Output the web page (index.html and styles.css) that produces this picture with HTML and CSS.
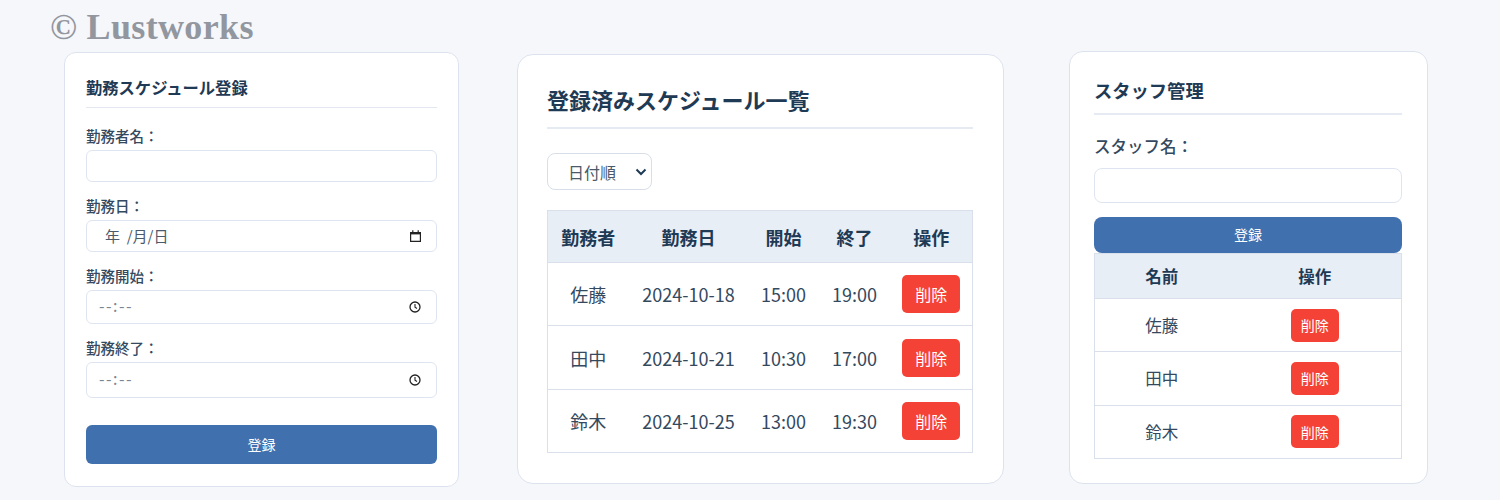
FILE: index.html
```html
<!DOCTYPE html>
<html lang="ja">
<head>
  <meta charset="UTF-8" />
  <title>勤務スケジュール</title>
  <link rel="stylesheet" href="styles.css">
</head>
<body>
  <div class="watermark">© Lustworks</div>
  <main class="page">
    <section class="card card-form">
      <h2>勤務スケジュール登録</h2>
      <label>勤務者名：</label>
      <div class="input h-name"></div>
      <label>勤務日：</label>
      <div class="input h-date date">
        <span>年 &nbsp;/月/日</span>
        <svg width="11" height="12" viewBox="0 0 11 12"><path d="M.6 2.5h9.8v8.9H.6z" fill="none" stroke="#222" stroke-width="1.2"/><path d="M2.8.3v2M8.2.3v2" stroke="#222" stroke-width="1.2"/><rect x=".6" y="2" width="9.8" height="2.4" fill="#222"/></svg>
      </div>
      <label>勤務開始：</label>
      <div class="input h-start time">
        <span>--:--</span>
        <svg width="12" height="12" viewBox="0 0 12 12"><circle cx="6" cy="6" r="5" fill="none" stroke="#222" stroke-width="1.3"/><path d="M6 3v3.2l2 1.3" fill="none" stroke="#222" stroke-width="1.1"/></svg>
      </div>
      <label>勤務終了：</label>
      <div class="input h-end time">
        <span>--:--</span>
        <svg width="12" height="12" viewBox="0 0 12 12"><circle cx="6" cy="6" r="5" fill="none" stroke="#222" stroke-width="1.3"/><path d="M6 3v3.2l2 1.3" fill="none" stroke="#222" stroke-width="1.1"/></svg>
      </div>
      <button class="submit">登録</button>
    </section>

    <section class="card card-list">
      <h2>登録済みスケジュール一覧</h2>
      <div class="select">
        <span>日付順</span>
        <svg width="12" height="8" viewBox="0 0 12 8"><path d="M1.5 1.5 6 6l4.5-4.5" fill="none" stroke="#1f3a54" stroke-width="2"/></svg>
      </div>
      <table>
        <thead>
          <tr><th>勤務者</th><th>勤務日</th><th>開始</th><th>終了</th><th>操作</th></tr>
        </thead>
        <tbody>
          <tr><td>佐藤</td><td>2024-10-18</td><td>15:00</td><td>19:00</td><td><button class="del">削除</button></td></tr>
          <tr><td>田中</td><td>2024-10-21</td><td>10:30</td><td>17:00</td><td><button class="del">削除</button></td></tr>
          <tr><td>鈴木</td><td>2024-10-25</td><td>13:00</td><td>19:30</td><td><button class="del">削除</button></td></tr>
        </tbody>
      </table>
    </section>

    <section class="card card-staff">
      <h2>スタッフ管理</h2>
      <label>スタッフ名：</label>
      <div class="input"></div>
      <button class="submit">登録</button>
      <table>
        <thead>
          <tr><th>名前</th><th>操作</th></tr>
        </thead>
        <tbody>
          <tr><td>佐藤</td><td><button class="del">削除</button></td></tr>
          <tr><td>田中</td><td><button class="del">削除</button></td></tr>
          <tr><td>鈴木</td><td><button class="del">削除</button></td></tr>
        </tbody>
      </table>
    </section>
  </main>
</body>
</html>
```

FILE: styles.css
```css
* {
  margin: 0;
  padding: 0;
  box-sizing: border-box;
}

html, body {
  height: 100%;
  background: #f5f7fb;
  font-family: "Noto Sans CJK JP", "Noto Sans", sans-serif;
  color: #34495e;
  overflow: hidden;
}

.watermark {
  position: absolute;
  top: 6px;
  left: 50px;
  font-family: "Liberation Serif", serif;
  font-weight: bold;
  font-size: 36px;
  letter-spacing: 0.35px;
  line-height: 42px;
  color: #92969f;
}

.page {
  display: flex;
  align-items: flex-start;
  padding-left: 64px;
}

.card {
  background: #fff;
  border: 1px solid #dde3ee;
  border-radius: 12px;
}

h2 {
  color: #1f3a54;
  font-weight: 700;
}

label {
  display: block;
  font-weight: 500;
}

.input {
  background: #fff;
  border: 1px solid #dfe5f0;
  border-radius: 6px;
  display: flex;
  align-items: center;
  justify-content: space-between;
  color: #4a5a6a;
}

.submit {
  display: block;
  width: 100%;
  border: none;
  background: #4070ae;
  color: #fff;
  font-family: inherit;
}

.del {
  border: none;
  background: #f44336;
  color: #fff;
  font-family: inherit;
}

/* left card */
.card-form {
  width: 395px;
  height: 435px;
  margin-top: 52px;
  padding: 22px 21px;
}

.card-form h2 {
  font-size: 16.3px;
  line-height: 24px;
  padding-bottom: 8px;
  border-bottom: 1px solid #e3e8f0;
  margin-bottom: 16px;
}

.card-form label {
  font-size: 14.5px;
  line-height: 24px;
  height: 26px;
}

.card-form .input {
  margin-bottom: 12px;
  padding: 0 15px 0 12px;
  font-size: 15px;
}

.h-name { height: 31.5px; }
.h-date { height: 32px; }
.h-start { height: 34.5px; }
.h-end { height: 35.5px; }

.date span {
  padding-left: 6px;
}

.time span {
  font-size: 16px;
  letter-spacing: 1.5px;
  color: #7a8592;
  padding-bottom: 3px;
}

.card-form .submit {
  height: 39px;
  margin-top: 27px;
  border-radius: 6px;
  font-size: 14px;
}

/* middle card */
.card-list {
  width: 487px;
  height: 430px;
  margin: 54px 0 0 58px;
  padding: 28px 30px 28px 29px;
  border-radius: 16px;
}

.card-list h2 {
  font-size: 22px;
  line-height: 32px;
  padding-bottom: 12px;
  border-bottom: 2px solid #e6ebf3;
  margin-bottom: 24px;
}

.select {
  width: 105px;
  height: 37px;
  border: 1px solid #d8dfea;
  border-radius: 8px;
  display: flex;
  align-items: center;
  padding: 0 4px 0 20px;
  justify-content: space-between;
  font-size: 16px;
  color: #4a5a6a;
  margin-bottom: 20px;
}

table {
  width: 100%;
  border-collapse: collapse;
  table-layout: fixed;
  text-align: center;
}

th, td {
  border-top: 1px solid #d9e0ec;
  border-bottom: 1px solid #d9e0ec;
}

th:first-child, td:first-child {
  border-left: 1px solid #d9e0ec;
}

th:last-child, td:last-child {
  border-right: 1px solid #d9e0ec;
}

th {
  background: #e8eef6;
  color: #1f3a54;
  font-weight: 700;
}

.card-list th, .card-list td {
  font-size: 18px;
}

.card-list th:nth-child(1) { width: 81px; }
.card-list th:nth-child(2) { width: 120px; }
.card-list th:nth-child(3) { width: 70px; }
.card-list th:nth-child(4) { width: 72px; }

.card-list thead tr { height: 52px; }
.card-list tbody tr { height: 63.4px; }

.card-list .del {
  width: 58px;
  height: 38px;
  border-radius: 5px;
  font-size: 16px;
  vertical-align: middle;
}

/* right card */
.card-staff {
  width: 359px;
  height: 433px;
  margin: 51px 0 0 65px;
  padding: 24px 25px 24px 24px;
  border-radius: 14px;
}

.card-staff h2 {
  font-size: 18.3px;
  line-height: 28px;
  padding-bottom: 9px;
  border-bottom: 2px solid #e6ebf3;
  margin-bottom: 19px;
}

.card-staff label {
  font-size: 16.5px;
  line-height: 24px;
  margin-bottom: 10px;
}

.card-staff .input {
  height: 35px;
  border-radius: 8px;
  margin-bottom: 14px;
}

.card-staff .submit {
  height: 36px;
  padding-bottom: 2px;
  border-radius: 8px;
  font-size: 14px;
}

.card-staff th, .card-staff td {
  font-size: 16.5px;
}

.card-staff th:first-child { width: 134px; }

.card-staff thead tr { height: 45px; }
.card-staff tbody tr { height: 53.3px; }

.card-staff .del {
  width: 48px;
  height: 33px;
  border-radius: 5px;
  font-size: 14px;
  vertical-align: middle;
}
```
